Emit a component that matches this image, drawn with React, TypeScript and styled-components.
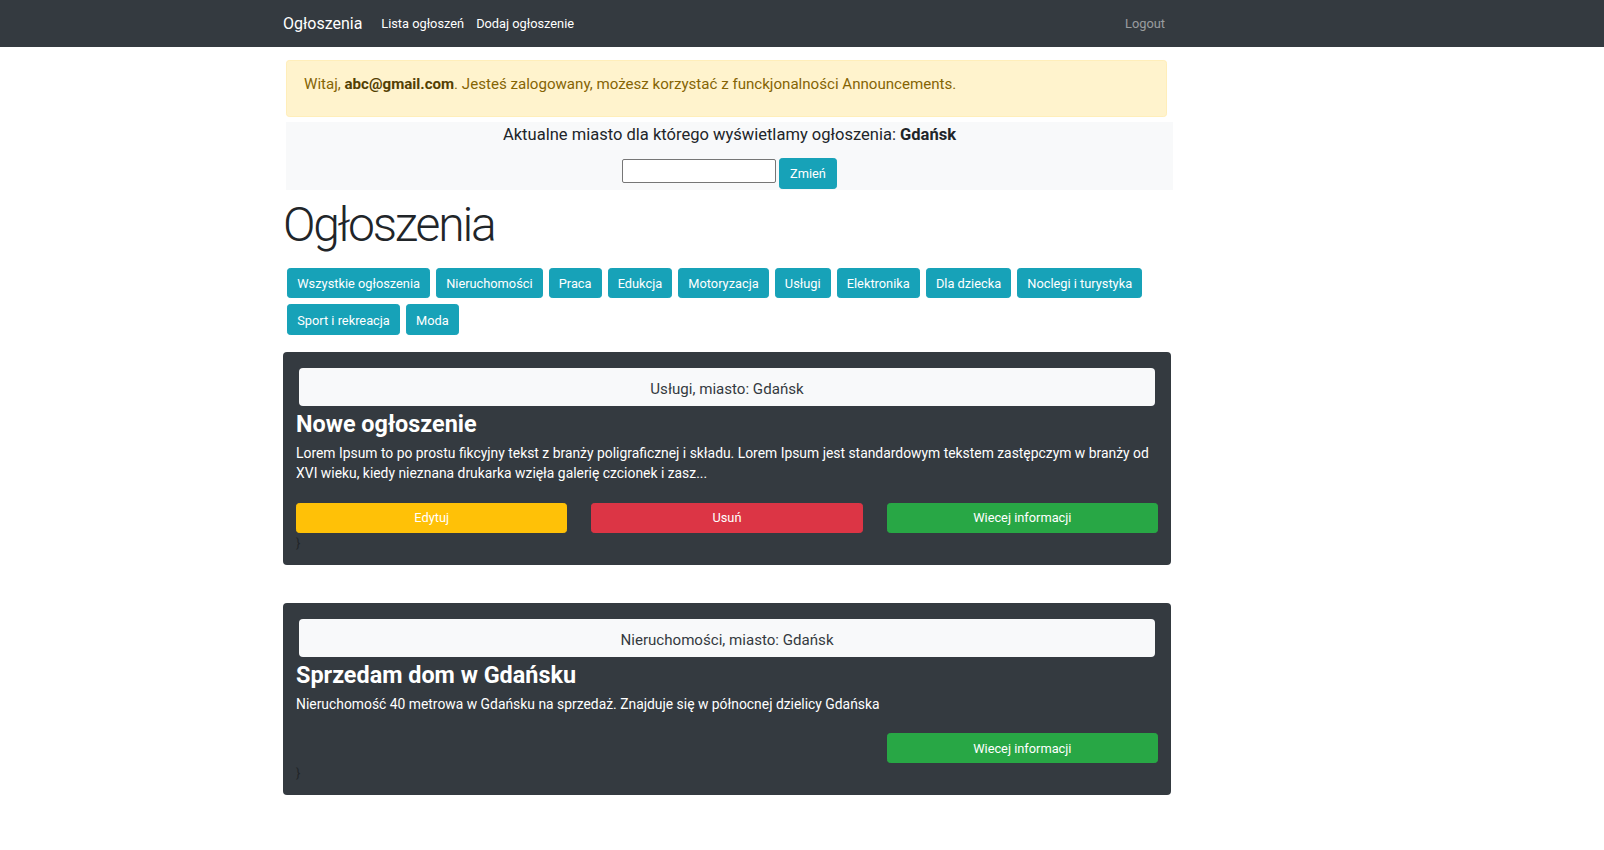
import React from 'react';
import styled, { createGlobalStyle } from 'styled-components';

const Global = createGlobalStyle`
  * { box-sizing: border-box; }
  html, body { margin: 0; padding: 0; background: #fff; }
  body {
    font-family: Roboto, "Noto Sans", "Liberation Sans", sans-serif;
    font-size: 12.8px;
    line-height: 1.5;
    color: #212529;
  }
`;

const NavBar = styled.nav`
  height: 47px;
  background: #343a40;
  display: flex;
  align-items: center;
  padding-top: 1px;
`;

const NavInner = styled.div`
  width: 888px;
  margin-left: 283px;
  display: flex;
  align-items: center;
`;

const Brand = styled.a`
  font-size: 16px;
  line-height: 24px;
  color: #fff;
  margin-right: 12.8px;
  text-decoration: none;
`;

const NavLink = styled.a<{ $muted?: boolean; $push?: boolean }>`
  padding: 0 6px;
  font-size: 12.8px;
  line-height: 20px;
  color: ${(p) => (p.$muted ? 'rgba(255,255,255,.5)' : '#fff')};
  margin-left: ${(p) => (p.$push ? 'auto' : '0')};
  text-decoration: none;
`;

const Main = styled.main`
  width: 888px;
  margin-left: 283px;
  display: flex;
  flex-direction: column;
`;

const Alert = styled.div`
  margin: 13px 4px 0 3px;
  padding: 13px 17px 21px;
  background: #fff3cd;
  border: 1px solid #ffeeba;
  border-radius: 3.2px;
  color: #856404;
  font-size: 15.1px;
  line-height: 21px;

  b { font-weight: 700; color: #533f03; }
`;

const CityPanel = styled.section`
  margin: 5px -2px 0 3px;
  padding: 1px 0 1px;
  background: #f8f9fa;
  display: flex;
  flex-direction: column;
  align-items: center;
`;

const Lead = styled.p`
  margin: 0;
  font-size: 16.55px;
  line-height: 24px;
  color: #212529;
  b { font-weight: 700; }
`;

const CityForm = styled.form`
  margin-top: 11px;
  display: flex;
  align-items: flex-start;
  gap: 3px;
`;

const CityInput = styled.input`
  margin-top: 1px;
  width: 154px;
  height: 24px;
  border: 1px solid #767676;
  border-radius: 2px;
  background: #fff;
  padding: 0 4px;
  font-family: inherit;
`;

const InfoButton = styled.button`
  height: 30.5px;
  padding: 1.5px 9.6px 0;
  border: 1px solid #17a2b8;
  border-radius: 3.2px;
  background: #17a2b8;
  color: #fff;
  font-family: inherit;
  font-size: 12.8px;
  line-height: 19.2px;
  cursor: pointer;
`;

const Heading = styled.h1`
  margin: 6px 0 0;
  font-size: 48px;
  font-weight: 300;
  line-height: 57.6px;
  letter-spacing: -2.2px;
  color: #212529;
`;

const Categories = styled.div`
  margin-top: 11.5px;
  padding-left: 1.2px;
  display: flex;
  flex-wrap: wrap;
`;

const CategoryButton = styled(InfoButton)`
  height: 30.8px;
  margin: 2.95px;
  padding: 1px 9.15px 0;
`;

const Card = styled.article`
  margin-top: 14px;
  margin-bottom: 24px;
  padding: 13px 13px 11px;
  background: #343a40;
  border-radius: 4px;
  display: flex;
  flex-direction: column;
`;

const CardHeader = styled.div`
  margin: 3px 3px 0;
  height: 38px;
  padding-top: 4px;
  background: #f8f9fa;
  border-radius: 4px;
  display: flex;
  align-items: center;
  justify-content: center;
  font-size: 15.1px;
  color: #343a40;
`;

const CardTitle = styled.h3`
  margin: 5px 0 0;
  font-size: 23.4px;
  font-weight: 700;
  line-height: 27px;
  color: #fff;
`;

const CardText = styled.p`
  margin: 4px 0 0;
  padding-top: 1px;
  font-size: 13.88px;
  line-height: 20.5px;
  color: #fff;
`;

const Actions = styled.div`
  margin-top: 19px;
  display: grid;
  grid-template-columns: repeat(3, 1fr);
  column-gap: 24px;
`;

const ActionButton = styled.button<{ $bg: string; $col: number }>`
  grid-column: ${(p) => p.$col};
  height: 30px;
  padding-top: 1px;
  border: 1px solid ${(p) => p.$bg};
  border-radius: 3.2px;
  background: ${(p) => p.$bg};
  color: #fff;
  font-family: inherit;
  font-size: 12.8px;
  line-height: 19.2px;
  cursor: pointer;
`;

const Stray = styled.div`
  height: 21px;
  line-height: 20px;
  font-size: 12.8px;
  color: #212529;
`;

const categories = [
  'Wszystkie ogłoszenia',
  'Nieruchomości',
  'Praca',
  'Edukcja',
  'Motoryzacja',
  'Usługi',
  'Elektronika',
  'Dla dziecka',
  'Noclegi i turystyka',
  'Sport i rekreacja',
  'Moda',
];

type Ad = {
  header: string;
  title: string;
  text: string;
  owner: boolean;
};

const ads: Ad[] = [
  {
    header: 'Usługi, miasto: Gdańsk',
    title: 'Nowe ogłoszenie',
    text:
      'Lorem Ipsum to po prostu fikcyjny tekst z branży poligraficznej i składu. Lorem Ipsum jest standardowym tekstem zastępczym w branży od XVI wieku, kiedy nieznana drukarka wzięła galerię czcionek i zasz...',
    owner: true,
  },
  {
    header: 'Nieruchomości, miasto: Gdańsk',
    title: 'Sprzedam dom w Gdańsku',
    text: 'Nieruchomość 40 metrowa w Gdańsku na sprzedaż. Znajduje się w północnej dzielicy Gdańska',
    owner: false,
  },
];

export default function App() {
  return (
    <>
      <Global />
      <NavBar>
        <NavInner>
          <Brand href="#">Ogłoszenia</Brand>
          <NavLink href="#">Lista ogłoszeń</NavLink>
          <NavLink href="#">Dodaj ogłoszenie</NavLink>
          <NavLink href="#" $muted $push>
            Logout
          </NavLink>
        </NavInner>
      </NavBar>
      <Main>
        <Alert>
          Witaj, <b>abc@gmail.com</b>. Jesteś zalogowany, możesz korzystać z funckjonalności Announcements.
        </Alert>
        <CityPanel>
          <Lead>
            Aktualne miasto dla którego wyświetlamy ogłoszenia: <b>Gdańsk</b>
          </Lead>
          <CityForm onSubmit={(e) => e.preventDefault()}>
            <CityInput type="text" />
            <InfoButton type="submit">Zmień</InfoButton>
          </CityForm>
        </CityPanel>
        <Heading>Ogłoszenia</Heading>
        <Categories>
          {categories.map((c) => (
            <CategoryButton key={c}>{c}</CategoryButton>
          ))}
        </Categories>
        {ads.map((ad) => (
          <Card key={ad.title}>
            <CardHeader>{ad.header}</CardHeader>
            <CardTitle>{ad.title}</CardTitle>
            <CardText>{ad.text}</CardText>
            <Actions>
              {ad.owner && (
                <>
                  <ActionButton $bg="#ffc107" $col={1}>
                    Edytuj
                  </ActionButton>
                  <ActionButton $bg="#dc3545" $col={2}>
                    Usuń
                  </ActionButton>
                </>
              )}
              <ActionButton $bg="#28a745" $col={3}>
                Wiecej informacji
              </ActionButton>
            </Actions>
            <Stray>{'}'}</Stray>
          </Card>
        ))}
      </Main>
    </>
  );
}
